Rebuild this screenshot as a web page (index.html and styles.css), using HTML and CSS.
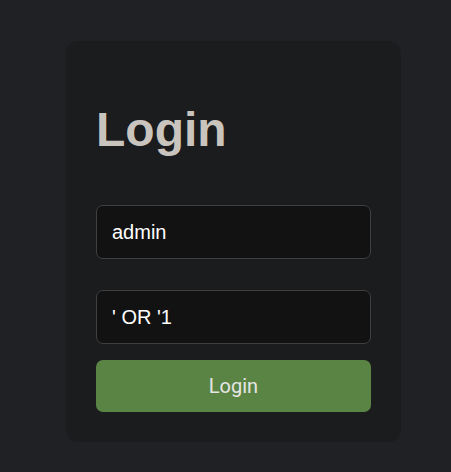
FILE: index.html
```html
<!DOCTYPE html>
<html>
<head>
<meta charset="utf-8">
<link rel="stylesheet" href="styles.css">
</head>
<body>
<div class="card">
  <h1 class="title">Login</h1>
  <form class="form">
    <input class="field" type="text" value="admin">
    <input class="field field-pass" type="text" value="' OR '1">
    <button class="btn" type="button">Login</button>
  </form>
</div>
</body>
</html>
```
FILE: styles.css
```css
html, body {
  margin: 0;
  padding: 0;
  background: #202124;
  height: 100%;
}
body {
  font-family: "Liberation Sans", Arial, sans-serif;
  padding-top: 41px;
  box-sizing: border-box;
}
.card {
  width: 335px;
  margin-left: 66px;
  background: #1b1c1e;
  border-radius: 12px;
  padding: 29px 30px 30px 30px;
  box-sizing: border-box;
}
.title {
  margin: 32px 0 0 0;
  font-size: 48px;
  font-weight: bold;
  line-height: 55px;
  color: #c9c5be;
}
.form {
  display: flex;
  flex-direction: column;
  margin-top: 48px;
}
.field {
  height: 54px;
  box-sizing: border-box;
  background: #121212;
  border: 1px solid #3e3f41;
  border-radius: 7px;
  color: #ffffff;
  font-family: "Liberation Sans", Arial, sans-serif;
  font-size: 20px;
  padding: 0 15px;
  outline: none;
}
.field-pass {
  margin-top: 31px;
}
.btn {
  margin-top: 16px;
  height: 52px;
  border: none;
  border-radius: 7px;
  background: #5a8444;
  color: #e6e6e6;
  font-family: Roboto, "Liberation Sans", sans-serif;
  font-size: 20px;
  cursor: pointer;
}
```
